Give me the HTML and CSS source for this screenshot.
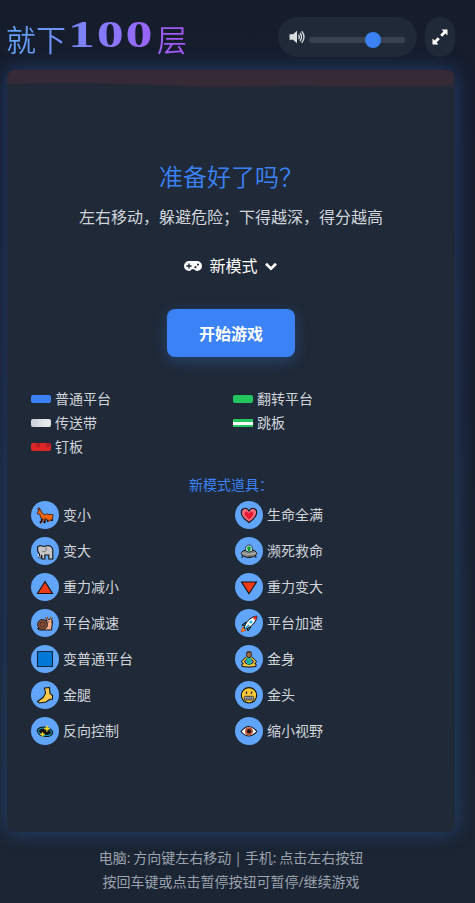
FILE: index.html
```html
<!DOCTYPE html>
<html lang="zh-CN">
<head>
<meta charset="utf-8">
<title>就下100层</title>
<link rel="stylesheet" href="styles.css">
</head>
<body>
<div class="app">
  <header class="header">
    <h1 class="title"><span class="title-start">就下</span><span class="title-num">100</span><span class="title-end">层</span></h1>
    <div class="controls">
      <div class="volume">
        <svg class="icon-volume" width="17" height="14" viewBox="0 0 17 14"><path d="M.5 4.300h3.500L8 .8v12.400L4 9.700H.5z" fill="#d8dbe0"/><path d="M9.500 4.800q1.600 2.200 0 4.400M11 3q3 4 0 8M12.700 1.300q4.600 5.700 0 11.400" fill="none" stroke="#d1d5db" stroke-width="1.400"/></svg>
        <div class="track"><div class="thumb"></div></div>
      </div>
      <button class="expand" aria-label="全屏">
        <svg width="16" height="16" viewBox="0 0 16 16"><path d="M9.500.5h6v6l-2-2-3.300 3.300-2-2 3.300-3.300zM.5 9.500l2 2 3.300-3.300 2 2-3.300 3.300 2 2h-6z" fill="#fff"/></svg>
      </button>
    </div>
  </header>

  <main class="panel">
    <svg class="ceiling" width="448" height="20" viewBox="0 0 448 20" preserveAspectRatio="none"><path d="M0 0H448L446 18Q360 19 300 16.500C260 16 235 19 195 18S90 12 0 14z" fill="#a13b2b" fill-opacity=".06"/><path d="M0 0H448L446 15Q360 17 300 15.500C250 15 230 17 190 16S90 12 0 14z" fill="#e34234" fill-opacity=".08"/></svg>
    <h2 class="ready">准备好了吗？</h2>
    <p class="intro">左右移动，躲避危险；下得越深，得分越高</p>
    <div class="mode">
      <svg width="20" height="12" viewBox="0 0 20 12"><path fill-rule="evenodd" d="M6 1h8a5 5 0 0 1 0 10q-1.700 0-2.800-1.700H8.800Q7.700 11 6 11A5 5 0 0 1 6 1zM5.300 3.400v1.900H3.400v1.400h1.900v1.900h1.400V6.700h1.900V5.300H6.700V3.400zM12.500 6a1.100 1.100 0 1 0 .01 0zM15 3.400a1.100 1.100 0 1 0 .01 0z" fill="#fff"/></svg>
      <span class="mode-name">新模式</span>
      <svg width="14" height="9" viewBox="0 0 14 9"><path d="M2 1.800 7 6.600l5-4.800" fill="none" stroke="#fff" stroke-width="2.700"/></svg>
    </div>
    <button class="start">开始游戏</button>

    <div class="platforms">
      <div class="platform"><i class="bar bar-normal"></i>普通平台</div>
      <div class="platform"><i class="bar bar-flip"></i>翻转平台</div>
      <div class="platform"><i class="bar bar-belt"></i>传送带</div>
      <div class="platform"><i class="bar bar-spring"></i>跳板</div>
      <div class="platform"><i class="bar bar-spike"></i>钉板</div>
    </div>

    <h3 class="props-title">新模式道具：</h3>
    <div class="props">
      <div class="prop"><svg class="badge" viewBox="0 0 28 28"><path d="M11 16v4l-2 2m5-6v4l-1 2m4-5v4m3-5 1 4M9 9 7 7" fill="none" stroke="#17120f" stroke-width="2.200"/><path d="M8 9q2-1 3 3l3 2q2-2 4-.500h4l-.500 5-4 1-3-2-2 1-3-2-.500-3-3-1z" fill="#f4640b" stroke="#351d10" stroke-width=".8"/><path d="M12 17v3l-2 2m4-5v3m4-2v3M9 9 7 7" fill="none" stroke="#d94c08" stroke-width=".9"/></svg>变小</div>
      <div class="prop"><svg class="badge" viewBox="0 0 28 28"><path d="M14 21.500C9 18 6.300 15 6.300 11.500 6.300 7 11.500 5.600 14 10c2.500-4.400 7.700-3 7.700 1.500 0 3.500-2.700 6.500-7.700 10z" fill="#f06b7d" stroke="#111" stroke-width="1.100"/><path d="M14 18.500c-3-2.300-4.300-4.100-4.300-6 0-2 2.800-2.500 4.300 0 1.500-2.500 4.300-2 4.300 0 0 1.900-1.300 3.700-4.300 6z" fill="#e81732"/></svg>生命全满</div>
      <div class="prop"><svg class="badge" viewBox="0 0 28 28"><path d="M6.500 10 9 8.500l4 1 4-1q4 .5 4.800 4V22h-4v-4h-4v4h-3v-4q-1 4-3 2l1-2-2-4z" fill="#c6c6c6" stroke="#111" stroke-width="1.100"/><path d="M14 9q3 3 0 6l-3-1" fill="none" stroke="#686868" stroke-width=".8"/><path d="M7.200 17q0 4 2.500 3" fill="none" stroke="#fff" stroke-width=".8"/></svg>变大</div>
      <div class="prop"><svg class="badge" viewBox="0 0 28 28"><path d="M7.500 18 7 21m13.500-3 .5 3" stroke="#111"/><path d="M6 16q2-3 5-3h6q3 0 5 3-1 4-8 4.500Q7 20 6 16z" fill="#858585" stroke="#111"/><path d="M6.500 16q7.500 3 15 0" fill="none" stroke="#bbb"/><path d="M10.500 14q-.5-6 3.500-6t3.500 6q-3.500 2-7 0z" fill="#b9e6f0" stroke="#111" stroke-width=".8"/><path d="M12 10.500q2-2 4 0l-1 3.500h-2z" fill="#109c2d"/><path d="M13 19h3" stroke="#555"/></svg>濒死救命</div>
      <div class="prop"><svg class="badge" viewBox="0 0 28 28"><path d="M14 8.500 21.500 20.500H6.500z" fill="#f03a17" stroke="#111" stroke-width="1.100"/></svg>重力减小</div>
      <div class="prop"><svg class="badge" viewBox="0 0 28 28"><path d="M14 20.800 21.500 9H6.500z" fill="#f03a17" stroke="#111" stroke-width="1.100"/></svg>重力变大</div>
      <div class="prop"><svg class="badge" viewBox="0 0 28 28"><path d="m15.500 8 1 4m4-4-1 4" stroke="#111" stroke-width="2.200"/><path d="M16 11q4-2 5.500 1L20.500 21H8l-1.500-1.500L15 18z" fill="#f6ad89" stroke="#111"/><path d="m15.500 7.500 1 4m4-4-1 4" stroke="#f6ad89"/><circle cx="11.500" cy="15.500" r="5" fill="#855039" stroke="#111" stroke-width=".8"/><circle cx="11.500" cy="15.500" r="2.500" fill="none" stroke="#4d2b20"/><path d="M17.500 13h.8m1.700 0h.8" stroke="#111"/></svg>平台减速</div>
      <div class="prop"><svg class="badge" viewBox="0 0 28 28"><path d="m8 18-2 5 5-2z" fill="#ffb02e" stroke="#e14a14"/><path d="m11 13-4 3 3 1zM16 18l-3 4-1-3z" fill="#129bd7" stroke="#111"/><path d="M10 16q4-8 12-9-1 8-9 12l-4 1z" fill="#f4f7f8" stroke="#111"/><path d="m17.500 8.500 4.500-1.500-1.500 4.500z" fill="#ef2d24"/><circle cx="16" cy="13" r="1.600" fill="#29b4df"/><path d="m14 16-4 4" stroke="#129bd7" stroke-width="1.400"/></svg>平台加速</div>
      <div class="prop"><svg class="badge" viewBox="0 0 28 28"><path d="M6.500 6.500h15v15h-15z" fill="#0078d7" stroke="#10263a" stroke-width="1.100"/></svg>变普通平台</div>
      <div class="prop"><svg class="badge" viewBox="0 0 28 28"><path d="M12 12.500 8 16.500l2 2.500m6-6.500 4 4-2 2.500" fill="none" stroke="#111" stroke-width="3"/><path d="M7 19q3-2 7 .5 4-2.500 7-.5v2.500l-5 .5h-4l-5-.5z" fill="#f4c542" stroke="#111"/><path d="M12 12.500 8 16.500l2 2.500m6-6.500 4 4-2 2.500" fill="none" stroke="#f4c542" stroke-width="1.500"/><path d="M11.500 12.500h5l-.5 7h-4z" fill="#18b697"/><ellipse cx="14" cy="9.500" rx="2.500" ry="3.200" fill="#a66b3f" stroke="#111" stroke-width=".8"/><path d="M11.800 8q2-2.500 4.400 0" fill="none" stroke="#5b3521" stroke-width="1.400"/></svg>金身</div>
      <div class="prop"><svg class="badge" viewBox="0 0 28 28"><path d="m13.500 7 5-.5.5 6 2.500 2v3.500l-3 .5-3.500 2.500-6.500 1-2-1.500 5.500-4 2.500-4z" fill="#fbc94b" stroke="#111" stroke-width="1.100"/></svg>金腿</div>
      <div class="prop"><svg class="badge" viewBox="0 0 28 28"><circle cx="14" cy="14.300" r="7.700" fill="#fbc936" stroke="#111" stroke-width="1.100"/><path d="M11.500 10.500v2.500m5-2.500V13" stroke="#333" stroke-width="1.400"/><rect x="9.300" y="15.300" width="9.400" height="3.700" rx="1" fill="#bbb" stroke="#333" stroke-width=".9"/><path d="M9.500 17.200h9M11.800 15.300V19m2.300-3.700V19m2.300-3.700V19" stroke="#444" stroke-width=".6"/></svg>金头</div>
      <div class="prop"><svg class="badge" viewBox="0 0 28 28"><ellipse cx="14" cy="14.800" rx="7" ry="3.800" transform="rotate(10 14 14.800)" fill="#111" stroke="#111" stroke-width="2.700"/><ellipse cx="14" cy="14.800" rx="6.700" ry="3.600" transform="rotate(10 14 14.800)" fill="#111" stroke="#159cb4" stroke-width="1.100"/><path d="m16 8.500.7 2.300 2.300.7-2.300.9-.7 2.300-.8-2.300-2.300-.7 2.200-.9zM11.500 15l.7 1.700 1.800.7-1.800.6-.7 1.800-.7-1.800-1.800-.6 1.800-.7z" fill="#ffdc20" stroke="#ffdc20" stroke-width=".5"/></svg>反向控制</div>
      <div class="prop"><svg class="badge" viewBox="0 0 28 28"><path d="M6 14.500q8-10 16 0-8 9-16 0z" fill="#fff" stroke="#111" stroke-width="1.100"/><circle cx="14" cy="14.300" r="4" fill="#b95232"/><circle cx="14" cy="14.300" r="2" fill="#180d0c"/></svg>缩小视野</div>
    </div>
  </main>

  <footer class="footer">
    <p class="keys">电脑: 方向键左右移动 | 手机: 点击左右按钮</p>
    <p>按回车键或点击暂停按钮可暂停/继续游戏</p>
  </footer>
</div>
</body>
</html>
```
FILE: styles.css
```css
* { box-sizing: border-box; margin: 0; padding: 0; }

body {
  height: 903px;
  overflow: hidden;
  background: linear-gradient(180deg, #151c2c 0%, #1b2533 100%);
  font-family: "Open Sans", "Noto Sans CJK SC", sans-serif;
  color: #d1d5db;
}

button { border: 0; font: inherit; }

.app { width: 448px; margin-left: 7px; padding-top: 17px; }

.header { display: flex; justify-content: space-between; align-items: center; height: 40px; margin-bottom: 13px; }

.title { display: flex; align-items: center; margin-left: -1px; font-size: 30px; line-height: 40px; font-weight: 350; }
.title span { color: transparent; -webkit-background-clip: text; background-clip: text; }
.title-start { padding-top: 6px; background-image: linear-gradient(90deg, #60a5fa, #738ffb); }
.title-num {
  width: 60px;
  margin: -4px 29px 0 2px;
  font-family: "Liberation Serif", serif;
  font-size: 37px;
  font-weight: 700;
  letter-spacing: 1.2px;
  transform: scaleX(1.46);
  transform-origin: left;
  background-image: linear-gradient(90deg, #7689fb, #9b62f9);
}
.title-end { padding-top: 6px; background-image: linear-gradient(90deg, #9b60f8, #a855f7); }

.controls { display: flex; gap: 8px; }
.volume { display: flex; align-items: center; width: 139px; height: 40px; padding: 0 12px 0 11px; border-radius: 20px; background: #1f2937; }
.icon-volume { margin-right: 3px; }
.track { display: flex; align-items: center; width: 96px; height: 6px; margin-top: 6px; padding-left: 56px; border-radius: 3px; background: #374151; }
.thumb { width: 16px; height: 16px; border-radius: 50%; background: #3b82f6; }
.expand { display: flex; align-items: center; justify-content: center; width: 30px; height: 40px; border-radius: 15px; background: #1f2937; }

.panel {
  display: flex;
  flex-direction: column;
  align-items: center;
  height: 762px;
  overflow: hidden;
  border-radius: 8px;
  background: #1f2937;
  box-shadow: 0 0 20px rgba(59, 130, 246, .35);
}
.ceiling { display: block; flex: none; }
.ready { margin-top: 69px; font-size: 24px; line-height: 36px; font-weight: 350; color: #3b82f6; }
.intro { margin-top: 10px; font-size: 16px; line-height: 24px; }
.mode { display: flex; align-items: center; gap: 6px; margin: 25px 1px 0 0; font-size: 16px; line-height: 24px; color: #fff; }
.start {
  flex: none;
  width: 128px;
  height: 48px;
  margin-top: 31px;
  border-radius: 8px;
  background: #3b82f6;
  box-shadow: 0 4px 15px rgba(59, 130, 246, .3);
  color: #fff;
  font-size: 16px;
  font-weight: 700;
}

.platforms { display: grid; grid-template-columns: 1fr 1fr; gap: 4px; width: 400px; margin-top: 32px; font-size: 14px; line-height: 20px; }
.platform { display: flex; align-items: center; gap: 4px; }
.bar { width: 20px; height: 8px; border-radius: 2px; }
.bar-normal { background: #3b82f6; }
.bar-flip { background: #22c55e; }
.bar-belt { background: linear-gradient(100deg, #d1d5db 0 35%, #dce0e4 35% 60%, #e5e7eb 60%); }
.bar-spring { border-radius: 0; background: linear-gradient(#22c55e 0 3px, #fff 3px 6px, #22c55e 6px); }
.bar-spike { background: radial-gradient(circle at 7px 2px, #b01f22 2px, transparent 2.600px), radial-gradient(circle at 17px 2px, #b01f22 2px, transparent 2.600px), #dc2626; }

.props-title { margin-top: 18px; font-size: 14px; line-height: 20px; font-weight: 400; color: #3b82f6; }
.props { display: grid; grid-template-columns: 1fr 1fr; gap: 8px; width: 400px; margin-top: 6px; font-size: 14px; line-height: 20px; }
.prop { display: flex; align-items: center; gap: 4px; height: 28px; }
.badge { width: 28px; height: 28px; border-radius: 50%; background: #60a5fa; }

.footer { margin-top: 14px; text-align: center; font-size: 14px; line-height: 24px; color: #9ca3af; }
.keys { word-spacing: -.8px; }
```
